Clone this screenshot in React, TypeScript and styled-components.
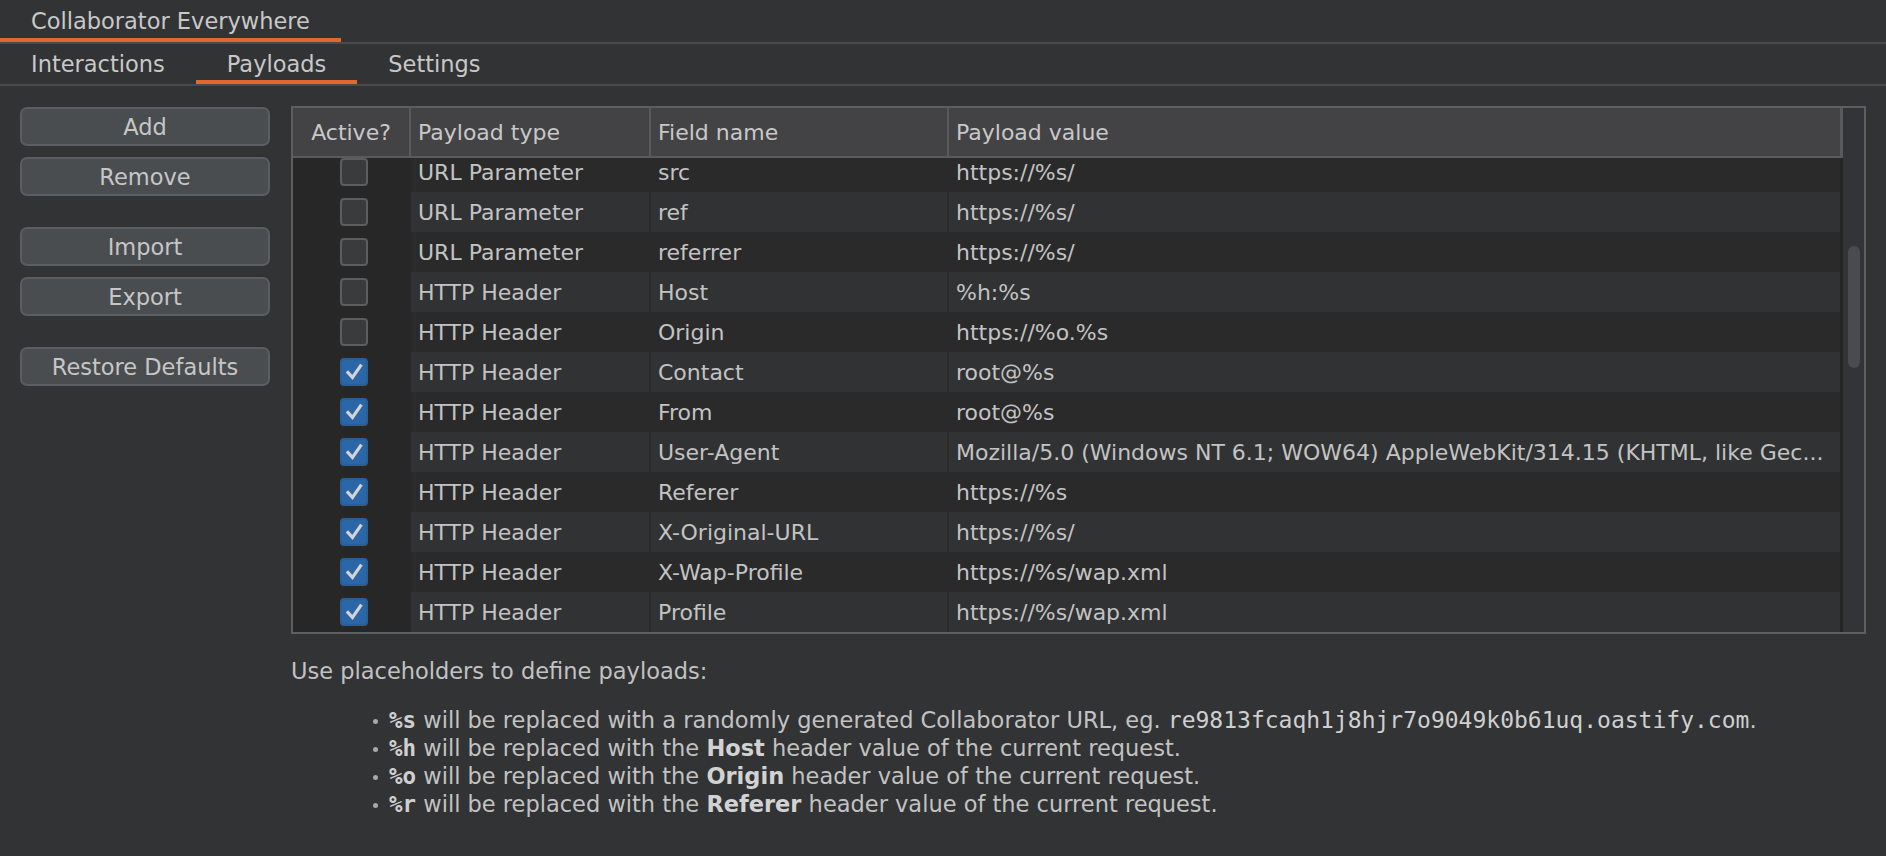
import styled, { createGlobalStyle } from 'styled-components';

const GlobalStyle = createGlobalStyle`
  html, body {
    margin: 0;
    padding: 0;
    background: #323335;
  }
  body {
    font-family: "DejaVu Sans", "Liberation Sans", sans-serif;
    font-size: 22.5px;
    color: #c4c4c4;
  }
`;

const Page = styled.div`
  width: 1886px;
  height: 856px;
  overflow: hidden;
  background: #323335;
`;

const TabBar = styled.div<{ $height: number }>`
  display: flex;
  height: ${(p) => p.$height}px;
  border-bottom: 2px solid #4a4a4c;
`;

const Tab = styled.div<{ $active?: boolean }>`
  display: flex;
  align-items: center;
  padding: 0 31px;
  box-sizing: border-box;
  color: #c8c8c8;
  white-space: nowrap;
  box-shadow: ${(p) => (p.$active ? 'inset 0 -4px 0 #e0692f' : 'none')};
`;

const Content = styled.div`
  display: flex;
  gap: 21px;
  padding: 20px 20px 0 20px;
`;

const ButtonColumn = styled.div`
  width: 250px;
  flex: none;
  display: flex;
  flex-direction: column;
  gap: 11px;
  padding-top: 1px;
`;

const ActionButton = styled.button<{ $spaced?: boolean }>`
  height: 39px;
  margin-top: ${(p) => (p.$spaced ? '20px' : '0')};
  background: #4a4d50;
  border: 2px solid #5a5d61;
  border-radius: 7px;
  color: #c6c6c6;
  font-family: inherit;
  font-size: 22.5px;
  padding: 0;
  cursor: pointer;
`;

const Main = styled.div`
  flex: 1;
  display: flex;
  flex-direction: column;
`;

const Table = styled.div`
  height: 528px;
  box-sizing: border-box;
  border: 2px solid #5e5e60;
  display: flex;
  font-size: 22px;
`;

const TableMain = styled.div`
  flex: 1;
  display: flex;
  flex-direction: column;
  min-width: 0;
`;

const columns = '118px 240px 298px 1fr';

const HeaderRow = styled.div`
  display: grid;
  grid-template-columns: ${columns};
  height: 50px;
  box-sizing: border-box;
  background: #434345;
  border-bottom: 2px solid #5a5a5c;
`;

const HeaderCell = styled.div<{ $center?: boolean; $last?: boolean }>`
  display: flex;
  align-items: center;
  justify-content: ${(p) => (p.$center ? 'center' : 'flex-start')};
  padding: 1px 7px 0;
  border-right: ${(p) => (p.$last ? '3px' : '2px')} solid #5a5a5c;
  color: #c8c8c8;
  white-space: nowrap;
`;

const Body = styled.div`
  flex: 1;
  overflow: hidden;
  border-right: 3px solid #262627;
`;

const Rows = styled.div`
  margin-top: -6px;
`;

const Row = styled.div<{ $odd: boolean }>`
  display: grid;
  grid-template-columns: ${columns};
  height: 40px;
  background: ${(p) => (p.$odd ? '#2a2a2b' : '#313234')};
`;

const ActiveCell = styled.div`
  display: flex;
  align-items: center;
  padding-left: 47px;
  background: #272728;
`;

const Cell = styled.div<{ $last?: boolean }>`
  display: flex;
  align-items: center;
  padding: 1px 7px 0;
  border-right: ${(p) => (p.$last ? 'none' : '2px solid #2a2a2b')};
  color: #c3c3c3;
  white-space: nowrap;
  overflow: hidden;
`;

const Box = styled.div<{ $checked: boolean }>`
  width: 28px;
  height: 28px;
  box-sizing: border-box;
  border-radius: 4px;
  border: 2px solid ${(p) => (p.$checked ? '#2a5f98' : '#5c5d5f')};
  background: ${(p) => (p.$checked ? '#2b67a6' : '#3a3b3d')};
  display: flex;
  align-items: center;
  justify-content: center;
`;

const ScrollTrack = styled.div`
  width: 21px;
  flex: none;
  background: #333437;
  padding-top: 138px;
  box-sizing: border-box;
`;

const Thumb = styled.div`
  width: 12px;
  height: 122px;
  margin-left: 5px;
  border-radius: 6px;
  background: #4a4b4e;
`;

const Help = styled.div`
  margin-top: 23px;
  line-height: 28px;
  color: #c2c2c2;
`;

const List = styled.ul`
  list-style: none;
  margin: 21px 0 0 0;
  padding: 0 0 0 82px;
`;

const Item = styled.li`
  white-space: nowrap;
  &::before {
    content: '';
    display: inline-block;
    width: 5px;
    height: 5px;
    border-radius: 50%;
    background: #a8a8a8;
    margin-right: 11px;
    vertical-align: middle;
  }
`;

const Code = styled.code<{ $bold?: boolean }>`
  font-family: "DejaVu Sans Mono", "Liberation Mono", monospace;
  font-size: ${(p) => (p.$bold ? '22.5px' : '23px')};
  font-weight: ${(p) => (p.$bold ? 700 : 400)};
  color: #cfcfcf;
`;

const Strong = styled.b`
  color: #d2d2d2;
`;

type Payload = {
  active: boolean;
  type: string;
  field: string;
  value: string;
};

const payloads: Payload[] = [
  { active: false, type: 'URL Parameter', field: 'src', value: 'https://%s/' },
  { active: false, type: 'URL Parameter', field: 'ref', value: 'https://%s/' },
  { active: false, type: 'URL Parameter', field: 'referrer', value: 'https://%s/' },
  { active: false, type: 'HTTP Header', field: 'Host', value: '%h:%s' },
  { active: false, type: 'HTTP Header', field: 'Origin', value: 'https://%o.%s' },
  { active: true, type: 'HTTP Header', field: 'Contact', value: 'root@%s' },
  { active: true, type: 'HTTP Header', field: 'From', value: 'root@%s' },
  {
    active: true,
    type: 'HTTP Header',
    field: 'User-Agent',
    value: 'Mozilla/5.0 (Windows NT 6.1; WOW64) AppleWebKit/314.15 (KHTML, like Gec...',
  },
  { active: true, type: 'HTTP Header', field: 'Referer', value: 'https://%s' },
  { active: true, type: 'HTTP Header', field: 'X-Original-URL', value: 'https://%s/' },
  { active: true, type: 'HTTP Header', field: 'X-Wap-Profile', value: 'https://%s/wap.xml' },
  { active: true, type: 'HTTP Header', field: 'Profile', value: 'https://%s/wap.xml' },
];

const CheckMark = () => (
  <svg width="28" height="28" viewBox="0 0 28 28" style={{ margin: -2 }}>
    <path d="M8 14.5 L12.5 19.5 L20.5 8" fill="none" stroke="#d3d3d3" strokeWidth="3.2" strokeLinecap="square" strokeLinejoin="miter" />
  </svg>
);

const Checkbox = ({ checked }: { checked: boolean }) => (
  <Box $checked={checked}>{checked && <CheckMark />}</Box>
);

const App = () => {
  return (
    <Page>
      <GlobalStyle />
      <TabBar $height={42}>
        <Tab $active>Collaborator Everywhere</Tab>
      </TabBar>
      <TabBar $height={40}>
        <Tab>Interactions</Tab>
        <Tab $active>Payloads</Tab>
        <Tab>Settings</Tab>
      </TabBar>
      <Content>
        <ButtonColumn>
          <ActionButton>Add</ActionButton>
          <ActionButton>Remove</ActionButton>
          <ActionButton $spaced>Import</ActionButton>
          <ActionButton>Export</ActionButton>
          <ActionButton $spaced>Restore Defaults</ActionButton>
        </ButtonColumn>
        <Main>
          <Table>
            <TableMain>
              <HeaderRow>
                <HeaderCell $center>Active?</HeaderCell>
                <HeaderCell>Payload type</HeaderCell>
                <HeaderCell>Field name</HeaderCell>
                <HeaderCell $last>Payload value</HeaderCell>
              </HeaderRow>
              <Body>
                <Rows>
                  {payloads.map((p, i) => (
                    <Row key={p.field} $odd={i % 2 === 0}>
                      <ActiveCell>
                        <Checkbox checked={p.active} />
                      </ActiveCell>
                      <Cell>{p.type}</Cell>
                      <Cell>{p.field}</Cell>
                      <Cell $last>{p.value}</Cell>
                    </Row>
                  ))}
                </Rows>
              </Body>
            </TableMain>
            <ScrollTrack>
              <Thumb />
            </ScrollTrack>
          </Table>
          <Help>
            Use placeholders to define payloads:
            <List>
              <Item>
                <Code $bold>%s</Code> will be replaced with a randomly generated Collaborator URL, eg.{' '}
                <Code>re9813fcaqh1j8hjr7o9049k0b61uq.oastify.com</Code>.
              </Item>
              <Item>
                <Code $bold>%h</Code> will be replaced with the <Strong>Host</Strong> header value of the current request.
              </Item>
              <Item>
                <Code $bold>%o</Code> will be replaced with the <Strong>Origin</Strong> header value of the current request.
              </Item>
              <Item>
                <Code $bold>%r</Code> will be replaced with the <Strong>Referer</Strong> header value of the current request.
              </Item>
            </List>
          </Help>
        </Main>
      </Content>
    </Page>
  );
};

export default App;
